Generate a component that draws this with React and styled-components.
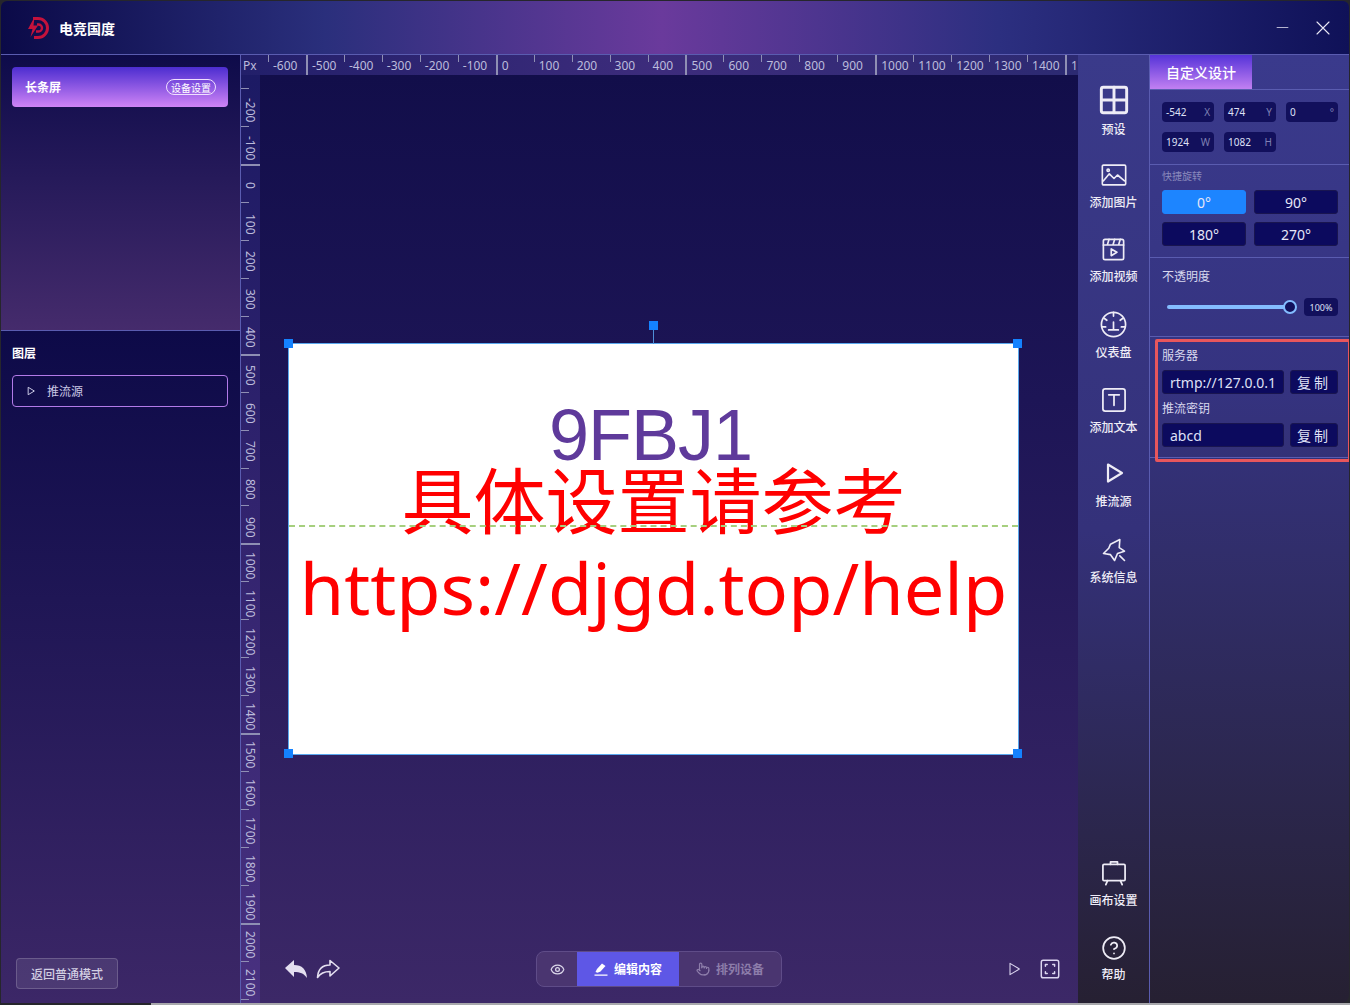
import React from "react";
import styled, { createGlobalStyle } from "styled-components";
import { CircleHelp, Eye, Pointer } from "lucide-react";

const uiFont = `"Noto Sans", "Noto Sans CJK SC", sans-serif`;

const topMarks = Array.from({ length: 22 }, (_, i) => -600 + i * 100);
const sideMarks = Array.from({ length: 25 }, (_, i) => -200 + i * 100);

const GlobalStyle = createGlobalStyle`
  html, body {
    margin: 0;
    padding: 0;
    background: #26262c;
    font-family: ${uiFont};
    overflow: hidden;
  }
  * { box-sizing: border-box; }
`;

const Desktop = styled.div`
  width: 1350px;
  height: 1005px;
  display: flex;
  flex-direction: column;
  padding: 1px 0 0 1px;
`;

const Window = styled.div`
  width: 1348px;
  height: 1002px;
  display: flex;
  flex-direction: column;
  border-radius: 6px 6px 8px 0;
  overflow: hidden;
  color: #e8e6f4;
`;

const BottomEdge = styled.div`
  height: 2px;
  margin-left: 150px;
  background: #a8a8ac;
`;

const Header = styled.header`
  height: 54px;
  flex: none;
  display: flex;
  align-items: center;
  padding: 0 18px 0 26px;
  border-bottom: 1px solid #5a5cb0;
  background: linear-gradient(90deg, #0b0a48 0%, #2a2f7c 24%, #6a3a9c 49%, #2c2f80 74%, #0f1158 100%);
`;

const Brand = styled.div`
  display: flex;
  align-items: center;
  gap: 10px;
  flex: 1;
  font-size: 14px;
  font-weight: 700;
  color: #fff;
`;

const WindowButtons = styled.div`
  display: flex;
  align-items: center;
  gap: 26px;
`;

const Body = styled.div`
  flex: 1;
  display: flex;
  min-height: 0;
`;

const LeftPanel = styled.aside`
  width: 240px;
  flex: none;
  display: flex;
  flex-direction: column;
  border-right: 1px solid #5a5cb0;
`;

const ScreenSection = styled.section`
  height: 276px;
  flex: none;
  padding: 12px 12px 0 11px;
  border-bottom: 1px solid #5a5cb0;
  background: linear-gradient(180deg, #0e0b4a 0%, #261a5a 45%, #452b6c 100%);
`;

const ScreenCard = styled.div`
  height: 40px;
  display: flex;
  align-items: center;
  justify-content: space-between;
  padding: 0 12px 0 13px;
  border-radius: 4px;
  background: linear-gradient(180deg, #4c2dd0 0%, #cf84f6 100%);
  font-size: 12px;
  font-weight: 700;
  color: #fff;
`;

const DeviceTag = styled.span`
  height: 16px;
  width: 50px;
  display: flex;
  align-items: center;
  justify-content: center;
  border: 1px solid #f0e0ff;
  border-radius: 8px;
  font-size: 10px;
  font-weight: 400;
`;

const LayerSection = styled.section`
  flex: 1;
  display: flex;
  flex-direction: column;
  padding: 14px 12px 14px 11px;
  background: linear-gradient(180deg, #0d0a48 0%, #1f1655 40%, #3c2767 100%);
`;

const LayerTitle = styled.div`
  font-size: 12px;
  font-weight: 700;
  line-height: 18px;
  color: #fff;
  margin-bottom: 12px;
`;

const LayerRow = styled.div`
  height: 32px;
  display: flex;
  align-items: center;
  gap: 11px;
  padding-left: 13px;
  border: 1px solid #b27ae8;
  border-radius: 4px;
  font-size: 12px;
  color: #c9c8e4;
`;

const BackButton = styled.button`
  margin: auto 0 0 4px;
  width: 102px;
  height: 31px;
  border-radius: 4px;
  border: 1px solid rgba(255, 255, 255, 0.18);
  background: rgba(255, 255, 255, 0.09);
  color: #d2cee2;
  font: 500 12px ${uiFont};
`;

const Workspace = styled.main`
  width: 837px;
  flex: none;
  display: flex;
  flex-direction: column;
  min-height: 0;
`;

const TopRuler = styled.div`
  height: 20px;
  flex: none;
  display: flex;
  overflow: hidden;
  background: linear-gradient(90deg, #221f6a 0%, #3d2c7c 50%, #2c2a72 100%);
`;

const Corner = styled.div`
  width: 27px;
  flex: none;
  padding-left: 2px;
  font-size: 12px;
  line-height: 22px;
  color: #bcbcdc;
`;

const TopMark = styled.div`
  width: 37.96px;
  flex: none;
  display: flex;
  gap: 4px;
  font-size: 12px;
  line-height: 22px;
  color: #bcbcdc;
  white-space: nowrap;
`;

const TopTick = styled.span`
  flex: none;
  width: ${(p) => (p.$major ? 2 : 1)}px;
  height: ${(p) => (p.$major ? 20 : 7)}px;
  background: #8f8fb4;
`;

const StageRow = styled.div`
  flex: 1;
  display: flex;
  min-height: 0;
`;

const SideRuler = styled.div`
  width: 19px;
  flex: none;
  padding-top: 13px;
  overflow: hidden;
  background: linear-gradient(180deg, #1c1a64 0%, #33246f 50%, #493180 100%);
`;

const SideMark = styled.div`
  height: 37.96px;
  position: relative;
  display: flex;
  justify-content: center;
  padding-top: 5px;
  font-size: 12px;
  line-height: 18px;
  color: #bcbcdc;
  writing-mode: vertical-rl;
  white-space: nowrap;
  border-top: 1px solid transparent;
`;

const SideTick = styled.span`
  position: absolute;
  top: -1px;
  left: 0;
  width: ${(p) => (p.$major ? 19 : 8)}px;
  height: ${(p) => (p.$major ? 2 : 1)}px;
  background: #8f8fb4;
`;

const Stage = styled.div`
  flex: 1;
  display: flex;
  flex-direction: column;
  padding: 269px 0 0 29px;
  background: linear-gradient(180deg, #120e4a 0%, #1d1556 35%, #3c2867 100%);
`;

const Screen = styled.div`
  position: relative;
  width: 729px;
  height: 410px;
  flex: none;
  display: flex;
  flex-direction: column;
  align-items: center;
  padding-top: 60px;
  background: #fff;
  outline: 1px solid #5aa8ee;
`;

const Handle = styled.span`
  position: absolute;
  width: 9px;
  height: 9px;
  background: #1482ff;
  top: ${(p) => (p.$bottom ? "405px" : "-5px")};
  left: ${(p) => (p.$right ? "724px" : "-5px")};
`;

const RotateHandle = styled.span`
  position: absolute;
  left: 360px;
  top: -23px;
  width: 9px;
  height: 9px;
  background: #1482ff;
  &::after {
    content: "";
    position: absolute;
    left: 4px;
    top: 9px;
    width: 1px;
    height: 14px;
    background: #4f8fd8;
  }
`;

const Guide = styled.span`
  position: absolute;
  left: 0;
  right: 0;
  top: 181px;
  border-top: 2px dashed #a6cf7e;
`;

const CodeLine = styled.div`
  font: 72px/62px "Liberation Sans", sans-serif;
  color: #5f3a9b;
  margin-left: -6px;
  letter-spacing: -1px;
`;

const HintLine = styled.div`
  font: 72px/62px "Noto Sans CJK SC", sans-serif;
  color: #f00;
`;

const UrlLine = styled.div`
  font: 72px/90px "Noto Sans", sans-serif;
  color: #f00;
  margin-top: 14px;
  white-space: nowrap;
`;

const BottomBar = styled.div`
  margin: auto 0 16px -29px;
  height: 36px;
  display: flex;
  align-items: center;
`;

const HistoryGroup = styled.div`
  width: 276px;
  flex: none;
  display: flex;
  align-items: center;
  gap: 8px;
  padding-left: 24px;
  color: #e4dff0;
`;

const ModeSwitch = styled.div`
  width: 246px;
  height: 36px;
  flex: none;
  display: flex;
  overflow: hidden;
  border: 1px solid #5f4c88;
  border-radius: 8px;
  background: #4a3570;
`;

const ModeEye = styled.div`
  width: 40px;
  display: flex;
  align-items: center;
  justify-content: center;
  color: #dcd8ea;
`;

const ModeTab = styled.div`
  flex: 1;
  display: flex;
  align-items: center;
  justify-content: center;
  gap: 6px;
  font-size: 12px;
  font-weight: 700;
  background: ${(p) => (p.$active ? "#5e57e6" : "transparent")};
  color: ${(p) => (p.$active ? "#fff" : "#8d7daa")};
`;

const ViewGroup = styled.div`
  margin-left: auto;
  display: flex;
  align-items: center;
  gap: 17px;
  padding-right: 17px;
  color: #dcd6f0;
`;

const ToolRail = styled.nav`
  width: 72px;
  flex: none;
  display: flex;
  flex-direction: column;
  padding: 18px 0 7px;
  border-right: 1px solid #5a5cb0;
  background: linear-gradient(180deg, #3a3a8a 0%, #34317a 50%, #262032 100%);
`;

const Tool = styled.div`
  height: 75px;
  flex: none;
  display: flex;
  flex-direction: column;
  align-items: center;
  justify-content: center;
  gap: ${(p) => p.$gap || 6}px;
  font-size: 12px;
  line-height: 16px;
  font-weight: 500;
  color: #eeecf6;
  ${(p) => p.$pushDown && "margin-top: auto;"}
`;

const SidePanel = styled.aside`
  flex: 1;
  position: relative;
  display: flex;
  flex-direction: column;
  background: linear-gradient(180deg, #3a3a8c 0%, #353380 35%, #262032 100%);
`;

const TabBar = styled.div`
  height: 35px;
  flex: none;
  border-bottom: 1px solid #5a5cb0;
`;

const ActiveTab = styled.div`
  width: 102px;
  height: 34px;
  display: flex;
  align-items: center;
  justify-content: center;
  font-size: 14px;
  font-weight: 500;
  color: #fff;
  background: linear-gradient(180deg, #5533d8 0%, #c280f2 100%);
`;

const Section = styled.section`
  height: ${(p) => p.$height}px;
  flex: none;
  padding: ${(p) => p.$pad || "0 12px"};
  border-bottom: 1px solid #5a5cb0;
`;

const FieldGrid = styled.div`
  display: grid;
  grid-template-columns: repeat(3, 52px);
  gap: 10px;
`;

const Field = styled.div`
  height: 20px;
  display: flex;
  align-items: center;
  justify-content: space-between;
  padding: 0 4px;
  border-radius: 4px;
  background: #12105c;
  font-size: 10px;
  color: #dfe0f6;
`;

const FieldUnit = styled.span`
  color: #7f80b4;
`;

const MutedLabel = styled.div`
  font-size: 10px;
  line-height: 14px;
  color: #8a8abc;
  margin-bottom: 7px;
`;

const RotateGrid = styled.div`
  display: grid;
  grid-template-columns: repeat(2, 84px);
  gap: 8px;
`;

const RotateButton = styled.button`
  height: 24px;
  padding: 0;
  border-radius: 3px;
  border: 1px solid ${(p) => (p.$active ? "#1d85ff" : "#191550")};
  background: ${(p) => (p.$active ? "#1d85ff" : "#0c0a5e")};
  color: #e6e6f8;
  font: 14px ${uiFont};
`;

const PanelLabel = styled.div`
  font-size: 12px;
  line-height: 16px;
  color: #d8d8ee;
`;

const SliderRow = styled.div`
  display: flex;
  align-items: center;
  justify-content: space-between;
  margin-top: 13px;
  padding-left: 5px;
`;

const SliderTrack = styled.div`
  position: relative;
  width: 124px;
  height: 4px;
  border-radius: 2px;
  background: #83bcff;
`;

const SliderKnob = styled.span`
  position: absolute;
  right: -6px;
  top: -5px;
  width: 14px;
  height: 14px;
  border-radius: 50%;
  background: #12105c;
  border: 2px solid #83bcff;
`;

const ValueChip = styled.div`
  width: 34px;
  height: 18px;
  display: flex;
  align-items: center;
  justify-content: center;
  border-radius: 4px;
  background: #12105c;
  font-size: 9px;
  color: #dfe0f6;
`;

const CopyRow = styled.div`
  display: flex;
  justify-content: space-between;
  margin: 6px 0 7px;
`;

const CopyInput = styled.input`
  width: 122px;
  height: 24px;
  padding: 0 7px;
  border-radius: 3px;
  border: 1px solid #191550;
  background: #0c0a5e;
  color: #dfe0f6;
  font: 14px ${uiFont};
  outline: none;
`;

const CopyButton = styled.button`
  width: 48px;
  height: 24px;
  padding: 0;
  border-radius: 3px;
  border: 1px solid #191550;
  background: #0c0a5e;
  color: #dfe0f6;
  font: 14px ${uiFont};
  letter-spacing: 3px;
`;

const Callout = styled.div`
  position: absolute;
  left: 5px;
  right: -1px;
  top: 284px;
  height: 123px;
  border: 3px solid #e8565c;
  border-radius: 2px;
  pointer-events: none;
`;

const Svg = ({ size = 24, children, stroke = 2, ...rest }) => (
  <svg width={size} height={size} viewBox="0 0 24 24" fill="none" stroke="currentColor" strokeWidth={stroke} strokeLinecap="round" strokeLinejoin="round" {...rest}>
    {children}
  </svg>
);

const Logo = () => (
  <svg width="22" height="24" viewBox="0 0 22 24" fill="none">
    <path d="M6 2.5h5a9.5 9.5 0 0 1 0 19H7" stroke="#c4123c" strokeWidth="3" />
    <path d="M10 8.5h1.5a3.5 3.5 0 0 1 0 7H9" stroke="#c4123c" strokeWidth="2.4" />
    <path d="M7.5 1 1 13h4.5L3.5 21 11 9.5H6.5z" fill="#c4123c" />
  </svg>
);

const PlayOutline = ({ size = 24, stroke = 2 }) => (
  <Svg size={size} stroke={stroke}>
    <path d="M6 3.5 20 12 6 20.5z" />
  </Svg>
);

export default function App() {
  return (
    <>
      <GlobalStyle />
      <Desktop>
        <Window>
          <Header>
            <Brand>
              <Logo />
              电竞国度
            </Brand>
            <WindowButtons>
              <Svg size={13} stroke={1.4}><path d="M2 12h20" /></Svg>
              <Svg size={16} stroke={1.7}><path d="M3 3l18 18M21 3 3 21" /></Svg>
            </WindowButtons>
          </Header>
          <Body>
            <LeftPanel>
              <ScreenSection>
                <ScreenCard>
                  长条屏
                  <DeviceTag>设备设置</DeviceTag>
                </ScreenCard>
              </ScreenSection>
              <LayerSection>
                <LayerTitle>图层</LayerTitle>
                <LayerRow>
                  <PlayOutline size={10} stroke={2.4} />
                  推流源
                </LayerRow>
                <BackButton>返回普通模式</BackButton>
              </LayerSection>
            </LeftPanel>

            <Workspace>
              <TopRuler>
                <Corner>Px</Corner>
                {topMarks.map((v) => (
                  <TopMark key={v}>
                    <TopTick $major={v % 500 === 0} />
                    {v}
                  </TopMark>
                ))}
              </TopRuler>
              <StageRow>
                <SideRuler>
                  {sideMarks.map((v) => (
                    <SideMark key={v}>
                      <SideTick $major={v % 500 === 0} />
                      {v}
                    </SideMark>
                  ))}
                </SideRuler>
                <Stage>
                  <Screen>
                    <CodeLine>9FBJ1</CodeLine>
                    <HintLine>具体设置请参考</HintLine>
                    <UrlLine>https://djgd.top/help</UrlLine>
                    <Guide />
                    <RotateHandle />
                    <Handle />
                    <Handle $right />
                    <Handle $bottom />
                    <Handle $bottom $right />
                  </Screen>
                  <BottomBar>
                    <HistoryGroup>
                      <svg width="24" height="24" viewBox="0 0 24 24" fill="currentColor">
                        <path d="M1 11 10 3v5c8 0 12.500 4.500 13 13-3-4.500-7-6-13-6v5z" />
                      </svg>
                      <Svg size={24} stroke={1.6}>
                        <path d="M23 11 14 3.500V8C6 8 2 12.500 1.500 20.500 4.500 16 8 14.500 14 14.500V19z" />
                      </Svg>
                    </HistoryGroup>
                    <ModeSwitch>
                      <ModeEye><Eye size={15} /></ModeEye>
                      <ModeTab $active>
                        <svg width="14" height="14" viewBox="0 0 14 14" fill="currentColor">
                          <path d="M1.500 10 3 7l5-5.500L11.500 4l-5 5.500-3 1.200zM.5 12.500h13v1.200H.5z" />
                        </svg>
                        编辑内容
                      </ModeTab>
                      <ModeTab>
                        <Pointer size={14} />
                        排列设备
                      </ModeTab>
                    </ModeSwitch>
                    <ViewGroup>
                      <PlayOutline size={16} stroke={1.6} />
                      <Svg size={22} stroke={1.6}>
                        <rect x="2.500" y="2.500" width="19" height="19" rx="2" />
                        <path d="M7 9V7h2M15 7h2v2M17 15v2h-2M9 17H7v-2" />
                      </Svg>
                    </ViewGroup>
                  </BottomBar>
                </Stage>
              </StageRow>
            </Workspace>

            <ToolRail>
              <Tool>
                <Svg size={32} stroke={2.2}>
                  <rect x="2.500" y="2.500" width="19" height="19" rx="1.500" />
                  <path d="M12 2.500v19M2.500 12h19" />
                </Svg>
                预设
              </Tool>
              <Tool>
                <Svg size={28} stroke={1.4}>
                  <rect x="2" y="3.500" width="20" height="17" rx="1" />
                  <path d="m3 17 5-6 4 4 3-3 6 5" />
                  <circle cx="7" cy="8" r="1" />
                </Svg>
                添加图片
              </Tool>
              <Tool>
                <Svg size={27} stroke={1.5}>
                  <rect x="3" y="3" width="18" height="18" rx="1.500" />
                  <path d="M3 8h18M8 3 6.500 8M13 3l-1.500 5M18 3l-1.500 5M10 11.500l5 3-5 3z" />
                </Svg>
                添加视频
              </Tool>
              <Tool>
                <Svg size={29} stroke={1.4}>
                  <circle cx="12" cy="12" r="10" />
                  <path d="M12 2v3M4.500 7l2 1.500M19.500 7l-2 1.500M2.500 14h3M18.500 14h3M12 10v6M8 16.500h8" />
                </Svg>
                仪表盘
              </Tool>
              <Tool>
                <Svg size={28} stroke={1.5}>
                  <rect x="2.500" y="2.500" width="19" height="19" rx="2" />
                  <path d="M7.500 7.500h9M12 7.500v9" />
                </Svg>
                添加文本
              </Tool>
              <Tool $gap={9}>
                <PlayOutline size={24} stroke={2.2} />
                推流源
              </Tool>
              <Tool>
                <Svg size={28} stroke={1.4}>
                  <path d="m9 7 8-4-.5 7L21 13l-6 2-2.500 6-3.500-5-6-1 4.500-4.500z" />
                  <path d="m17 17 4 4" />
                </Svg>
                系统信息
              </Tool>
              <Tool $pushDown>
                <Svg size={28} stroke={1.5}>
                  <rect x="2.500" y="4.500" width="19" height="14" rx="1" />
                  <path d="M9 4.500V2.500h6v2M6.500 18.500 5 22M17.500 18.500 19 22" />
                </Svg>
                画布设置
              </Tool>
              <Tool>
                <CircleHelp size={26} strokeWidth={1.6} />
                帮助
              </Tool>
            </ToolRail>

            <SidePanel>
              <TabBar><ActiveTab>自定义设计</ActiveTab></TabBar>
              <Section $height={75} $pad="12px 12px 0">
                <FieldGrid>
                  <Field>-542<FieldUnit>X</FieldUnit></Field>
                  <Field>474<FieldUnit>Y</FieldUnit></Field>
                  <Field>0<FieldUnit>°</FieldUnit></Field>
                  <Field>1924<FieldUnit>W</FieldUnit></Field>
                  <Field>1082<FieldUnit>H</FieldUnit></Field>
                </FieldGrid>
              </Section>
              <Section $height={93} $pad="4px 12px 0">
                <MutedLabel>快捷旋转</MutedLabel>
                <RotateGrid>
                  <RotateButton $active>0°</RotateButton>
                  <RotateButton>90°</RotateButton>
                  <RotateButton>180°</RotateButton>
                  <RotateButton>270°</RotateButton>
                </RotateGrid>
              </Section>
              <Section $height={79} $pad="11px 12px 0">
                <PanelLabel>不透明度</PanelLabel>
                <SliderRow>
                  <SliderTrack><SliderKnob /></SliderTrack>
                  <ValueChip>100%</ValueChip>
                </SliderRow>
              </Section>
              <Section $height={121} $pad="11px 12px 0">
                <PanelLabel>服务器</PanelLabel>
                <CopyRow>
                  <CopyInput readOnly value="rtmp://127.0.0.1:1935/live" />
                  <CopyButton>复制</CopyButton>
                </CopyRow>
                <PanelLabel>推流密钥</PanelLabel>
                <CopyRow>
                  <CopyInput readOnly value="abcd" />
                  <CopyButton>复制</CopyButton>
                </CopyRow>
              </Section>
              <Callout />
            </SidePanel>
          </Body>
        </Window>
        <BottomEdge />
      </Desktop>
    </>
  );
}
